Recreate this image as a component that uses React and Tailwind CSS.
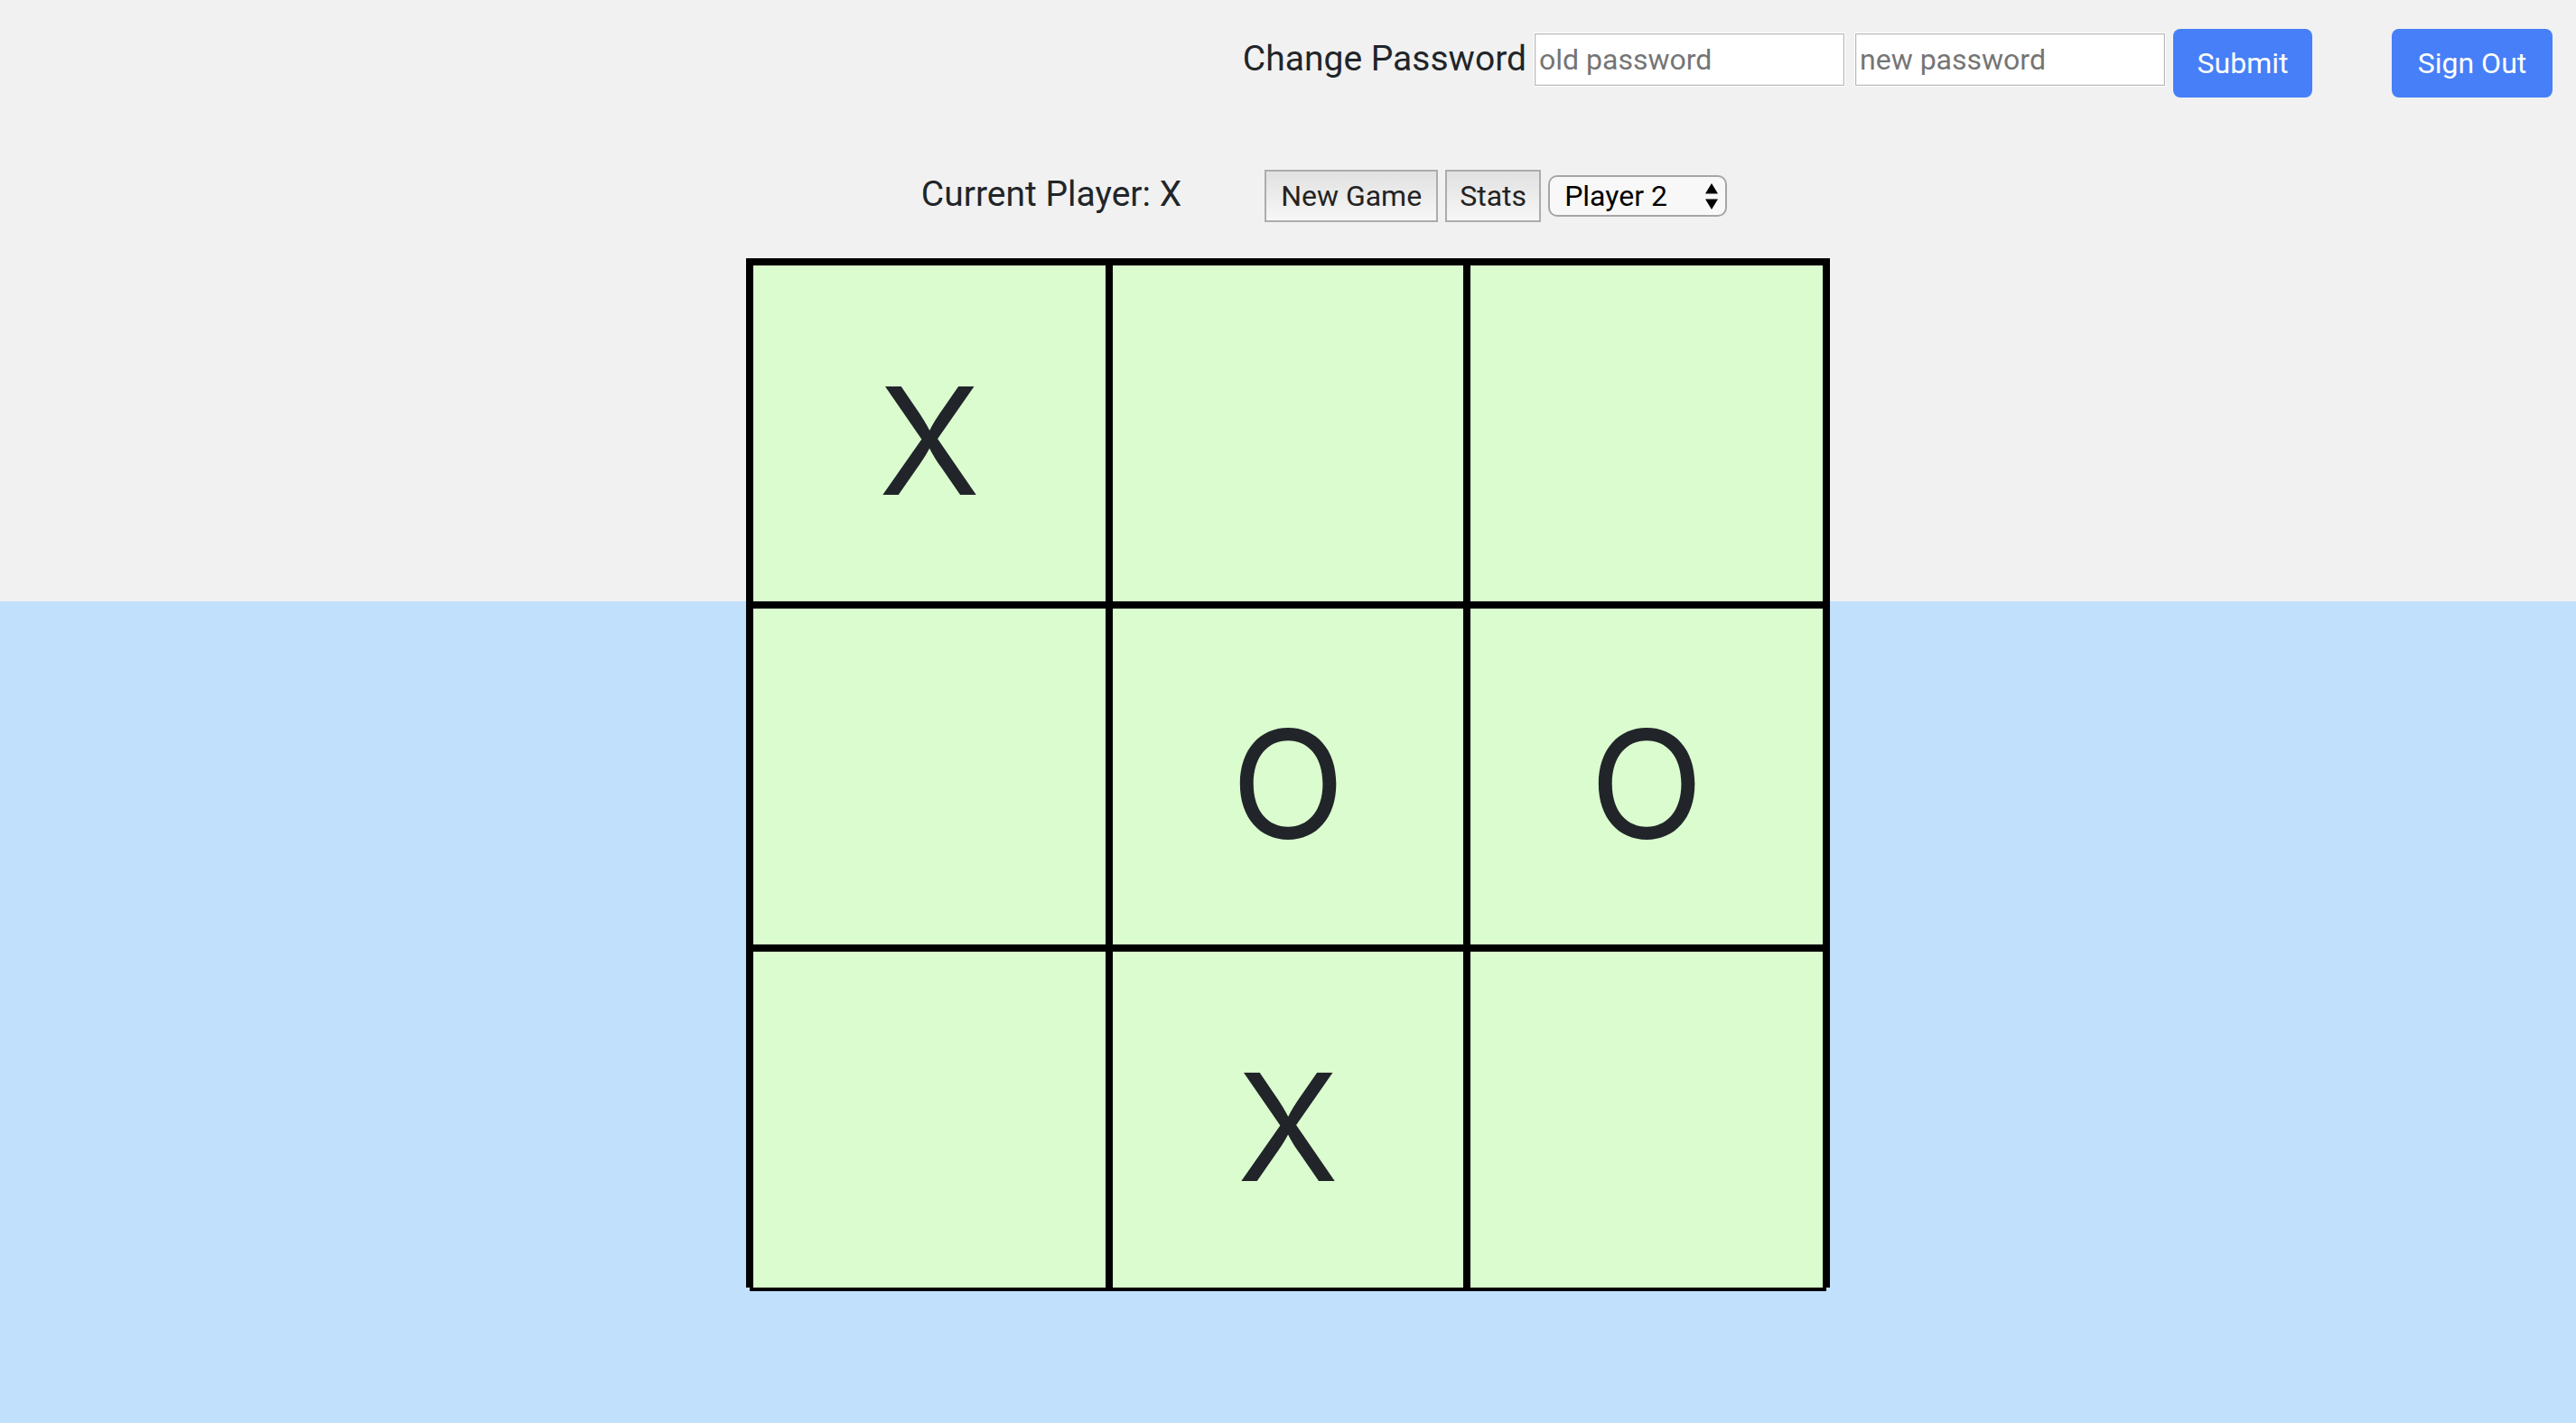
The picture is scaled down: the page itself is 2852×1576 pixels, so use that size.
import { useState } from "react";

const START = ["X", "", "", "", "O", "O", "", "X", ""];

const primaryButton =
  "h-[76px] rounded-lg bg-[#467ff7] text-[32px] leading-[48px] text-white";
const plainButton =
  "h-[58px] border-2 border-[#acacac] bg-linear-to-b from-[#e1e1e1] to-[#f7f7f7] text-[32px] leading-[48px] text-[#232323]";
const textField =
  "mt-1 h-[60px] w-[345px] border border-white bg-white px-[5px] text-[32px] text-[#212529] shadow-[inset_0_0_0_1px_#b9b9b9,inset_0_0_0_2px_#efefef] placeholder:text-[#757575] placeholder:opacity-100";

function AccountBar() {
  return (
    <header className="flex items-start justify-end pt-8 pr-[26px]">
      <form
        className="flex items-start"
        onSubmit={(event) => event.preventDefault()}
      >
        <label htmlFor="old-password" className="mt-1 mr-2 text-[39px] leading-[58px]">
          Change Password
        </label>
        <input
          id="old-password"
          type="password"
          placeholder="old password"
          className={textField}
        />
        <input
          type="password"
          aria-label="new password"
          placeholder="new password"
          className={"ml-[10px] mr-2 " + textField}
        />
        <button type="submit" className={"w-[154px] " + primaryButton}>
          Submit
        </button>
      </form>
      <button type="button" className={"ml-[88px] w-[178px] " + primaryButton}>
        Sign Out
      </button>
    </header>
  );
}

function PlayerSelect() {
  return (
    <div className="relative mt-[6px]">
      <select
        aria-label="Players"
        className="block h-[46px] w-[198px] appearance-none rounded-[10px] border-2 border-[#a6a6a6] bg-[#f8f8f8] pl-4 text-[32px] leading-[42px] text-black"
      >
        <option>Player 2</option>
        <option>Player 1</option>
      </select>
      <svg
        viewBox="0 0 14 29"
        className="pointer-events-none absolute top-[9px] right-[10px] h-[29px] w-[14px]"
        aria-hidden="true"
      >
        <path d="M7 0 14 11.5H0ZM7 29 0 17.5H14Z" />
      </svg>
    </div>
  );
}

export default function App() {
  const [cells, setCells] = useState(START);
  const [player, setPlayer] = useState("X");

  const play = (index) => {
    if (cells[index]) return;
    setCells(cells.map((mark, i) => (i === index ? player : mark)));
    setPlayer(player === "X" ? "O" : "X");
  };

  return (
    <div className="min-h-screen bg-[linear-gradient(#f1f1f1_666px,#c1e0fc_666px)] font-['Roboto',sans-serif] text-[#212529]">
      <AccountBar />
      <main>
        <div className="mt-20 flex items-start justify-center gap-2 pl-20">
          <p className="mr-21 text-[39px] leading-[54px]">Current Player: {player}</p>
          <button
            type="button"
            className={"w-[192px] " + plainButton}
            onClick={() => setCells(Array(9).fill(""))}
          >
            New Game
          </button>
          <button type="button" className={"w-[106px] " + plainButton}>
            Stats
          </button>
          <PlayerSelect />
        </div>
        <div className="mx-auto mt-11 grid w-full max-w-[1192px] auto-rows-[380px] grid-cols-[398fr_396fr_398fr] shadow-[-4px_-4px_0_#000,4px_-4px_0_#000]">
          {cells.map((mark, index) => (
            <button
              key={index}
              type="button"
              aria-label={"Cell " + (index + 1) + " " + mark}
              onClick={() => play(index)}
              className="flex items-center justify-center border-4 border-black bg-[#dafccf] pt-4 font-['Inter',sans-serif] text-[165px] leading-none"
            >
              {mark}
            </button>
          ))}
        </div>
      </main>
    </div>
  );
}
